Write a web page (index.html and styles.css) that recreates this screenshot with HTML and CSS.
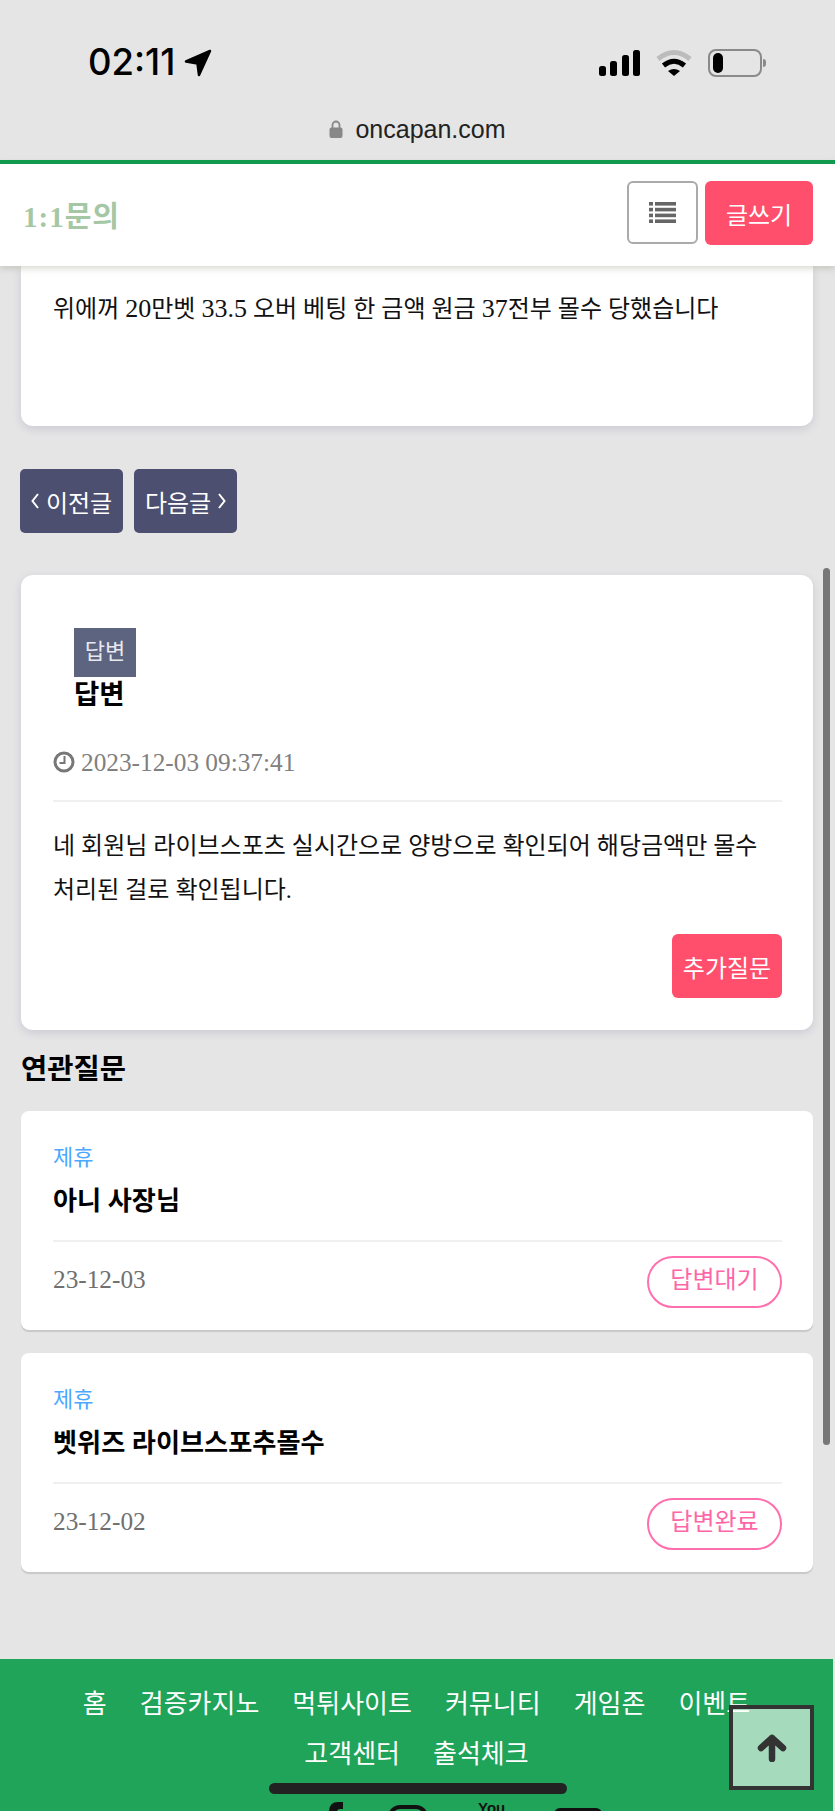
FILE: index.html
```html
<!DOCTYPE html>
<html lang="ko">
<head>
<meta charset="utf-8">
<title>1:1문의</title>
<link rel="stylesheet" href="styles.css">
</head>
<body>
<div class="chrome">
  <div class="status">
    <div class="status-left">
      <span class="time">02:11</span>
      <svg class="loc" width="28" height="28" viewBox="0 0 28 28"><path d="M26 2 L2 12.5 L13.5 14.5 L15 26 Z" fill="#000" stroke="#000" stroke-width="2.5" stroke-linejoin="round"/></svg>
    </div>
    <div class="status-right">
      <svg class="signal" width="42" height="26" viewBox="0 0 42 26"><rect x="0" y="16" width="7" height="10" rx="2.5"/><rect x="11" y="11" width="7" height="15" rx="2.5"/><rect x="23" y="5" width="7" height="21" rx="2.5"/><rect x="34" y="0" width="7" height="26" rx="2.5"/></svg>
      <svg class="wifi" width="36" height="27" viewBox="0 0 36 27"><path d="M2 10 Q18 -3 34 10" fill="none" stroke="#bcbcbc" stroke-width="5"/><path d="M7.5 16.5 Q18 8 28.500 16.500" fill="none" stroke="#000" stroke-width="5"/><path d="M12 22 L18 27 L24 22 Q18 18 12 22 Z" fill="#000"/></svg>
      <div class="battery"><span class="battery-level"></span></div>
      <span class="battery-nub"></span>
    </div>
  </div>
  <div class="urlbar">
    <svg class="lock" width="14" height="18" viewBox="0 0 14 18"><path d="M3.500 8 V5 A3.500 3.500 0 0 1 10.500 5 V8" fill="none" stroke="#888" stroke-width="1.800"/><rect x="0.500" y="7.500" width="13" height="10.500" rx="2" fill="#888"/></svg>
    <span>oncapan.com</span>
  </div>
</div>

<header class="topbar">
  <h1 class="topbar-title">1:1문의</h1>
  <div class="topbar-actions">
    <button class="btn-list" type="button" aria-label="목록">
      <svg width="27" height="21" viewBox="0 0 27 21" fill="#666"><rect x="0" y="0" width="4" height="3.600"/><rect x="6" y="0" width="21" height="3.600"/><rect x="0" y="5.800" width="4" height="3.600"/><rect x="6" y="5.800" width="21" height="3.600"/><rect x="0" y="11.600" width="4" height="3.600"/><rect x="6" y="11.600" width="21" height="3.600"/><rect x="0" y="17.400" width="4" height="3.600"/><rect x="6" y="17.400" width="21" height="3.600"/></svg>
    </button>
    <button class="btn-write" type="button">글쓰기</button>
  </div>
</header>

<main class="content">
  <section class="card question">
    <p class="body-text">위에꺼 <span class="num">20</span>만벳 <span class="num">33.5</span> 오버 베팅 한 금액 원금 <span class="num">37</span>전부 몰수 당했습니다</p>
  </section>

  <nav class="pager">
    <a class="pager-btn">
      <svg width="8" height="16" viewBox="0 0 8 16"><path d="M7 1 L1.500 8 L7 15" fill="none" stroke="#fff" stroke-width="2"/></svg>
      <span>이전글</span>
    </a>
    <a class="pager-btn">
      <span>다음글</span>
      <svg width="8" height="16" viewBox="0 0 8 16"><path d="M1 1 L6.500 8 L1 15" fill="none" stroke="#fff" stroke-width="2"/></svg>
    </a>
  </nav>

  <section class="card answer">
    <span class="badge">답변</span>
    <h2 class="answer-title">답변</h2>
    <div class="answer-date">
      <svg width="22" height="22" viewBox="0 0 22 22"><circle cx="11" cy="11" r="9" fill="none" stroke="#777" stroke-width="3"/><path d="M11.500 5 V12 H6.500" fill="none" stroke="#777" stroke-width="2"/></svg>
      <span>2023-12-03 09:37:41</span>
    </div>
    <p class="body-text answer-text">네 회원님 라이브스포츠 실시간으로 양방으로 확인되어 해당금액만 몰수 처리된 걸로 확인됩니다.</p>
    <div class="answer-actions"><button class="btn-more" type="button">추가질문</button></div>
  </section>

  <h3 class="related-heading">연관질문</h3>

  <article class="card item">
    <div class="item-cat">제휴</div>
    <div class="item-title">아니 사장님</div>
    <div class="item-meta">
      <span class="item-date">23-12-03</span>
      <span class="pill">답변대기</span>
    </div>
  </article>

  <article class="card item">
    <div class="item-cat">제휴</div>
    <div class="item-title">벳위즈 라이브스포추몰수</div>
    <div class="item-meta">
      <span class="item-date">23-12-02</span>
      <span class="pill">답변완료</span>
    </div>
  </article>
</main>

<footer class="footer">
  <nav class="footer-nav">
    <a>홈</a><a>검증카지노</a><a>먹튀사이트</a><a>커뮤니티</a><a>게임존</a><a>이벤트</a><a>고객센터</a><a>출석체크</a>
  </nav>
  <div class="social">
    <svg class="social-tw" width="44" height="36" viewBox="0 0 44 36"><path d="M4 8 Q14 1 24 5 Q33 0 40 8 L40 36 L4 36 Z" fill="#111"/></svg>
    <svg class="social-fb" width="20" height="36" viewBox="0 0 20 36"><path d="M18 0 H13 Q4 0 4 10 V15 H0 V22 H4 V36 H12 V22 H17 L18 15 H12 V10 Q12 7 15 7 H18 Z" fill="#111"/></svg>
    <svg class="social-ig" width="40" height="36" viewBox="0 0 40 36"><rect x="2" y="2" width="36" height="36" rx="10" fill="none" stroke="#111" stroke-width="4"/></svg>
    <span class="social-yt">You</span>
    <svg class="social-bl" width="48" height="36" viewBox="0 0 48 36"><rect x="0" y="0" width="48" height="36" rx="6" fill="#111"/></svg>
  </div>
</footer>

<div class="scrollbar"></div>
<button class="to-top" type="button" aria-label="맨 위로">
  <svg width="30" height="28" viewBox="0 0 30 28"><path d="M15 25 V4 M4 14 L15 4 L26 14" fill="none" stroke="#333" stroke-width="6.500" stroke-linecap="round" stroke-linejoin="round"/></svg>
</button>
<div class="home-indicator"></div>
</body>
</html>
```

FILE: styles.css
```css
* { box-sizing: border-box; }

html, body {
  margin: 0;
  height: 1811px;
  overflow: hidden;
}

body {
  background: #e5e5e6;
  color: #000;
  font-family: "Liberation Serif", "Noto Sans CJK KR", serif;
  font-size: 24px;
}

/* browser chrome */
.chrome {
  height: 160px;
  background: #e5e5e5;
  display: flex;
  flex-direction: column;
}

.status {
  display: flex;
  justify-content: space-between;
  align-items: center;
  height: 76px;
  padding: 49px 69px 0 88px;
}

.status-left, .status-right {
  display: flex;
  align-items: center;
}

.time {
  font-family: "Inter", "Liberation Sans", sans-serif;
  font-weight: 500;
  font-size: 36.500px;
  line-height: 27px;
}

.loc { margin-left: 9px; }

.signal { margin-right: 15px; }
.wifi { margin-right: 16px; }

.battery {
  width: 54px;
  height: 28px;
  border: 2px solid #8a8a8a;
  border-radius: 8px;
  padding: 2px 3px;
}

.battery-level {
  display: block;
  width: 10px;
  height: 20px;
  background: #000;
  border-radius: 5px;
}

.battery-nub {
  width: 3px;
  height: 8px;
  margin-left: 1px;
  background: #8a8a8a;
  border-radius: 0 3px 3px 0;
}

.urlbar {
  display: flex;
  justify-content: center;
  align-items: center;
  gap: 12px;
  margin-top: 36px;
  height: 34px;
  font-family: "Liberation Sans", sans-serif;
  font-size: 25px;
  color: #222;
}

/* top bar */
.topbar {
  position: relative;
  z-index: 2;
  display: flex;
  justify-content: space-between;
  align-items: center;
  height: 106px;
  padding: 0 22px 0 23px;
  background: #fff;
  border-top: 4px solid #0f9a4e;
  box-shadow: 0 3px 6px rgba(120, 120, 90, 0.25);
}

.topbar-title {
  margin: 0;
  font-size: 29px;
  font-weight: 700;
  letter-spacing: 1px;
  color: #a6c7a4;
  padding-bottom: 3px;
}

.topbar-actions {
  display: flex;
  gap: 7px;
  margin-top: -4px;
}

.btn-list {
  width: 71px;
  height: 63px;
  display: flex;
  align-items: center;
  justify-content: center;
  background: #fff;
  border: 2px solid #aaa;
  border-radius: 6px;
  padding: 0;
}

.btn-write {
  width: 108px;
  height: 64px;
  border: 0;
  border-radius: 6px;
  background: #ff4f6c;
  color: #fff;
  font-family: inherit;
  font-size: 24px;
  padding: 0;
}

/* content */
.content {
  width: 833px;
  padding: 0 20px 0 21px;
}

.card {
  background: #fff;
  border-radius: 10px;
}

.question, .answer {
  box-shadow: 0 3px 8px rgba(100, 100, 140, 0.2);
}

.question {
  height: 160px;
  padding: 21px 32px 0;
  border-radius: 0 0 12px 12px;
}

.body-text {
  margin: 0;
  line-height: 44px;
  font-size: 24px;
  color: #111;
}

.num { font-size: 26px; }

.pager {
  display: flex;
  gap: 11px;
  margin: 43px 0 0 -1px;
}

.pager-btn {
  width: 103px;
  height: 64px;
  display: flex;
  align-items: center;
  justify-content: center;
  gap: 7px;
  background: #4c4f6f;
  border-radius: 5px;
  color: #fff;
  font-size: 24px;
  white-space: nowrap;
}

.answer {
  margin-top: 42px;
  padding: 53px 31px 32px 32px;
  border-radius: 12px;
}

.badge {
  display: block;
  width: 62px;
  height: 49px;
  margin-left: 21px;
  background: #5d6480;
  color: #e8e8ee;
  font-size: 22px;
  line-height: 47px;
  text-align: center;
}

.answer-title {
  margin: 0 0 0 21px;
  font-size: 27.500px;
  font-weight: 700;
  line-height: 36px;
}

.answer-date {
  display: flex;
  align-items: center;
  gap: 6px;
  margin-top: 31px;
  padding-bottom: 20px;
  border-bottom: 2px solid #f0f0f0;
  font-size: 25.300px;
  line-height: 36px;
  color: #808080;
}

.answer-text { margin-top: 22px; }

.answer-actions {
  display: flex;
  justify-content: flex-end;
  margin-top: 22px;
}

.btn-more {
  width: 110px;
  height: 64px;
  border: 0;
  border-radius: 6px;
  background: #ff4f6c;
  color: #fff;
  font-family: inherit;
  font-size: 24px;
  padding: 0;
}

.related-heading {
  margin: 0;
  padding: 20px 0 21px;
  font-size: 28.500px;
  font-weight: 700;
  line-height: 40px;
}

.item {
  height: 219px;
  padding: 31px 31px 0 32px;
  border-radius: 8px;
  box-shadow: 0 2px 1px #c8c8c8;
}

.item + .item { margin-top: 23px; }

.item-cat {
  font-size: 22px;
  line-height: 32px;
  color: #4aa8ff;
}

.item-title {
  margin-top: 8px;
  padding-bottom: 18px;
  border-bottom: 2px solid #f0f0f0;
  font-size: 26.200px;
  font-weight: 700;
  line-height: 40px;
}

.item-meta {
  display: flex;
  justify-content: space-between;
  align-items: flex-start;
  margin-top: 14px;
}

.item-date {
  font-size: 25.300px;
  line-height: 46px;
  color: #707070;
}

.pill {
  width: 135px;
  height: 52px;
  border: 2px solid #ff6fae;
  border-radius: 26px;
  color: #ff66a8;
  font-size: 24px;
  line-height: 45px;
  text-align: center;
}

/* footer */
.footer {
  width: 833px;
  margin-top: 87px;
  padding-top: 21px;
  background: #1fa45a;
}

.footer-nav {
  display: flex;
  flex-wrap: wrap;
  justify-content: center;
  column-gap: 33px;
  padding: 0 40px;
  font-size: 26px;
  line-height: 50px;
  color: #fff;
}

.social {
  display: flex;
  align-items: flex-start;
  height: 40px;
  margin-top: 22px;
  padding-left: 242px;
}

.social-tw { margin-top: 8px; }
.social-fb { margin-left: 39px; }
.social-ig { margin-left: 43px; margin-top: 3px; }

.social-yt {
  margin-left: 50px;
  margin-top: -4px;
  font-family: "Liberation Sans", sans-serif;
  font-size: 15px;
  font-weight: 700;
  line-height: 20px;
  color: #111;
}

.social-bl { margin-left: 49px; margin-top: 6px; }

/* overlays */
.scrollbar {
  position: fixed;
  left: 823px;
  top: 568px;
  width: 7px;
  height: 877px;
  background: #777;
  border-radius: 4px;
}

.to-top {
  position: fixed;
  left: 729px;
  top: 1705px;
  width: 85px;
  height: 85px;
  display: flex;
  align-items: center;
  justify-content: center;
  padding: 0;
  border: 4px solid #333;
  background: rgba(255, 255, 255, 0.6);
}

.home-indicator {
  position: fixed;
  left: 269px;
  top: 1783px;
  width: 298px;
  height: 11px;
  background: #222;
  border-radius: 6px;
}
```
